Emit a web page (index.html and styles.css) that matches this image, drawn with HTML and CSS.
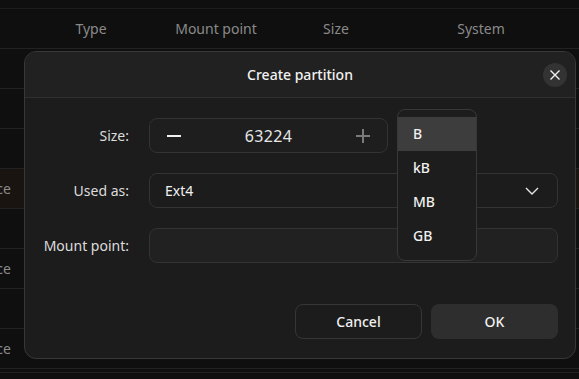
FILE: index.html
```html
<!DOCTYPE html>
<html lang="en">
<head>
    <meta charset="UTF-8">
    <title>Create partition</title>
    <link rel="stylesheet" href="styles.css">
</head>
<body>
    <div class="table">
        <div class="top-strip"></div>
        <div class="head">
            <div class="col name"></div>
            <div class="col type">Type</div>
            <div class="col mount">Mount point</div>
            <div class="col size">Size</div>
            <div class="col system">System</div>
        </div>
        <div class="row"><div class="name"></div></div>
        <div class="row"><div class="name"></div></div>
        <div class="row"><div class="name"></div></div>
        <div class="row selected"><div class="name">Free space</div></div>
        <div class="row"><div class="name"></div></div>
        <div class="row"><div class="name">Free space</div></div>
        <div class="row"><div class="name"></div></div>
        <div class="row"><div class="name">Free space</div></div>
        <div class="row short"></div>
    </div>

    <div class="dialog">
        <div class="dialog-header">
            <span class="dialog-title">Create partition</span>
            <button class="close-btn">
                <svg width="12" height="12" viewBox="0 0 12 12"><path d="M1.5 1.5 L10.5 10.5 M10.5 1.5 L1.5 10.5" stroke="#f2f2f2" stroke-width="1.4" fill="none"/></svg>
            </button>
        </div>
        <div class="dialog-body">
            <div class="form">
                <label>Size:</label>
                <div class="spin">
                    <span class="spin-btn">
                        <svg width="16" height="16" viewBox="0 0 16 16"><path d="M1 8 H15" stroke="#f0f0f0" stroke-width="2"/></svg>
                    </span>
                    <span class="spin-value">63224</span>
                    <span class="spin-btn">
                        <svg width="16" height="16" viewBox="0 0 16 16"><path d="M1 8 H15 M8 1 V15" stroke="#7a7a7a" stroke-width="2"/></svg>
                    </span>
                </div>

                <label>Used as:</label>
                <div class="field dropdown">
                    <span>Ext4</span>
                    <svg width="14" height="8" viewBox="0 0 14 8"><path d="M1 1 L7 7 L13 1" stroke="#e6e6e6" stroke-width="1.4" fill="none"/></svg>
                </div>

                <label>Mount point:</label>
                <div class="field entry"></div>
            </div>
            <div class="actions">
                <button class="btn cancel">Cancel</button>
                <button class="btn ok">OK</button>
            </div>
        </div>
    </div>

    <div class="popover">
        <div class="pop-item active">B</div>
        <div class="pop-item">kB</div>
        <div class="pop-item">MB</div>
        <div class="pop-item">GB</div>
    </div>
</body>
</html>
```

FILE: styles.css
```css
body {
    margin: 0;
    background: #0f0f0f;
    font-family: 'Noto Sans', 'Open Sans', sans-serif;
    font-size: 14px;
    color: #e0e0e0;
    width: 579px;
    height: 379px;
    overflow: hidden;
}

.top-strip {
    height: 8px;
    border-bottom: 1px solid #1d1d1d;
}

.head {
    display: grid;
    grid-template-columns: 41px 100px 150px 90px 200px;
    height: 39px;
    align-items: center;
    border-bottom: 1px solid #222;
    color: #8a8a8a;
}

.head .col {
    text-align: center;
}

.row {
    height: 39px;
    border-bottom: 1px solid #222;
    display: flex;
    align-items: center;
}

.row.selected {
    background: #19140f;
}

.row.short {
    height: 3px;
}

/* the list is scrolled: only the tail of the name shows */
.row .name {
    width: 11px;
    overflow: hidden;
    white-space: nowrap;
    direction: rtl;
    color: #8a8a8a;
}

.dialog {
    position: absolute;
    left: 24px;
    top: 51px;
    width: 550px;
    height: 306px;
    background: #1c1c1c;
    border: 1px solid #383838;
    border-radius: 12px;
    overflow: hidden;
    display: flex;
    flex-direction: column;
}

.dialog-header {
    height: 45px;
    background: #212121;
    border-bottom: 1px solid #303030;
    display: flex;
    align-items: center;
    justify-content: center;
    position: relative;
}

.dialog-title {
    color: #f2f2f2;
    font-weight: 500;
}

.close-btn {
    position: absolute;
    right: 8px;
    top: 11px;
    width: 24px;
    height: 24px;
    border-radius: 50%;
    border: none;
    background: #333;
    padding: 0;
    display: flex;
    align-items: center;
    justify-content: center;
}

.dialog-body {
    flex: 1;
    padding: 20px 17px 0 0;
    display: flex;
    flex-direction: column;
}

.form {
    display: grid;
    grid-template-columns: 104px 1fr;
    column-gap: 20px;
    row-gap: 20px;
    grid-auto-rows: 35px;
    align-items: center;
}

.form label {
    text-align: right;
    color: #dcdcdc;
}

.spin {
    width: 237px;
    height: 33px;
    border: 1px solid #333;
    border-radius: 8px;
    background: #1e1e1e;
    display: flex;
    align-items: center;
}

.spin-btn {
    width: 48px;
    display: flex;
    justify-content: center;
}

.spin-value {
    flex: 1;
    text-align: center;
    font-size: 16px;
    letter-spacing: 0.3px;
    color: #e6e6e6;
}

.field {
    height: 33px;
    border: 1px solid #333;
    border-radius: 8px;
    box-sizing: content-box;
}

.dropdown {
    background: #1c1c1c;
    display: flex;
    align-items: center;
    justify-content: space-between;
    padding: 0 18px 0 15px;
    color: #f0f0f0;
}

.entry {
    background: #212121;
}

.actions {
    margin-top: 41px;
    display: flex;
    justify-content: flex-end;
    gap: 9px;
}

.btn {
    width: 127px;
    height: 35px;
    border-radius: 8px;
    font-family: inherit;
    font-size: 14px;
    font-weight: 500;
    color: #f0f0f0;
}

.cancel {
    background: #1c1c1c;
    border: 1px solid #363636;
}

.ok {
    background: #2e2e2e;
    border: none;
}

.popover {
    position: absolute;
    left: 397px;
    top: 109px;
    width: 78px;
    padding: 7px 0;
    background: #1d1d1d;
    border: 1px solid #383838;
    border-radius: 8px;
}

.pop-item {
    height: 34px;
    line-height: 34px;
    padding-left: 15px;
    color: #f0f0f0;
    font-weight: 500;
}

.pop-item.active {
    background: #3d3d3d;
}
```
